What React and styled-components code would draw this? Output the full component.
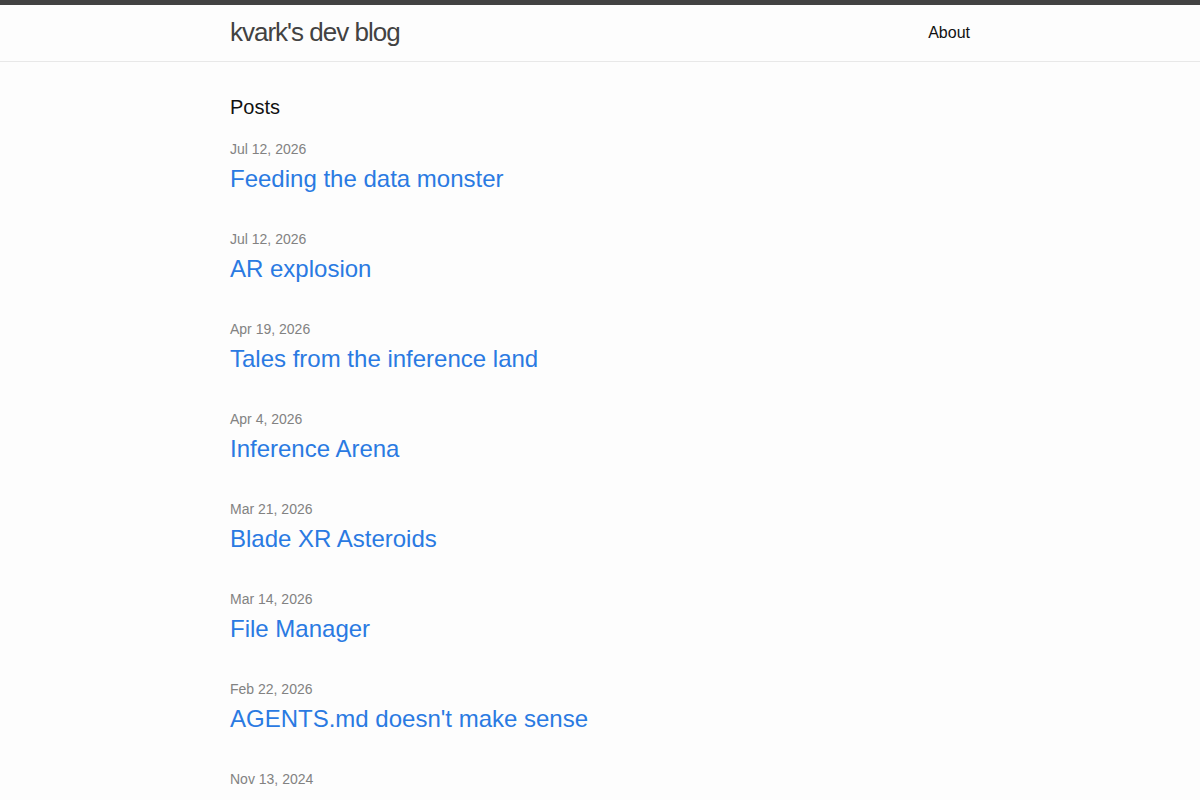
import React from "react";
import styled, { createGlobalStyle } from "styled-components";

const GlobalStyle = createGlobalStyle`
  html, body { margin: 0; padding: 0; }
  body {
    background: #fdfdfd;
    color: #111111;
    font-family: "Liberation Sans", Helvetica, Arial, sans-serif;
    font-size: 16px;
    font-weight: 300;
    line-height: 1.5;
  }
`;

const Header = styled.header`
  border-top: 5px solid #424242;
  border-bottom: 1px solid #e8e8e8;
  min-height: 56px;
`;

const Wrapper = styled.div`
  max-width: 740px;
  margin: 0 auto;
  padding: 0 30px;
`;

const HeaderRow = styled(Wrapper)`
  display: flex;
  justify-content: space-between;
  align-items: flex-start;
`;

const SiteTitle = styled.a`
  font-size: 26px;
  font-weight: 300;
  line-height: 54px;
  letter-spacing: -1px;
  color: #424242;
  text-decoration: none;
`;

const Nav = styled.nav`
  line-height: 54px;
  padding-top: 1px;
`;

const NavLink = styled.a`
  color: #111111;
  text-decoration: none;
  margin-left: 20px;
`;

const Main = styled.main`
  padding: 30px 0;
`;

const Heading = styled.h2`
  font-size: 20px;
  font-weight: 400;
  line-height: 30px;
  margin: 0 0 15px;
`;

const PostList = styled.ul`
  list-style: none;
  margin: 0;
  padding: 0;
`;

const PostItem = styled.li`
  margin-bottom: 30px;
`;

const Meta = styled.span`
  font-size: 14px;
  color: #828282;
`;

const PostTitle = styled.h3`
  margin: 0;
  font-size: 24px;
  font-weight: 400;
  line-height: 36px;
`;

const PostLink = styled.a`
  color: #2a7ae2;
  text-decoration: none;
`;

const posts = [
  ["Jul 12, 2026", "Feeding the data monster"],
  ["Jul 12, 2026", "AR explosion"],
  ["Apr 19, 2026", "Tales from the inference land"],
  ["Apr 4, 2026", "Inference Arena"],
  ["Mar 21, 2026", "Blade XR Asteroids"],
  ["Mar 14, 2026", "File Manager"],
  ["Feb 22, 2026", "AGENTS.md doesn't make sense"],
  ["Nov 13, 2024", "Older notes"],
];

export default function App() {
  return (
    <>
      <GlobalStyle />
      <Header>
        <HeaderRow>
          <SiteTitle href="#">kvark's dev blog</SiteTitle>
          <Nav>
            <NavLink href="#">About</NavLink>
          </Nav>
        </HeaderRow>
      </Header>
      <Main>
        <Wrapper>
          <Heading>Posts</Heading>
          <PostList>
            {posts.map(([date, title], i) => (
              <PostItem key={i}>
                <Meta>{date}</Meta>
                <PostTitle>
                  <PostLink href="#">{title}</PostLink>
                </PostTitle>
              </PostItem>
            ))}
          </PostList>
        </Wrapper>
      </Main>
    </>
  );
}
